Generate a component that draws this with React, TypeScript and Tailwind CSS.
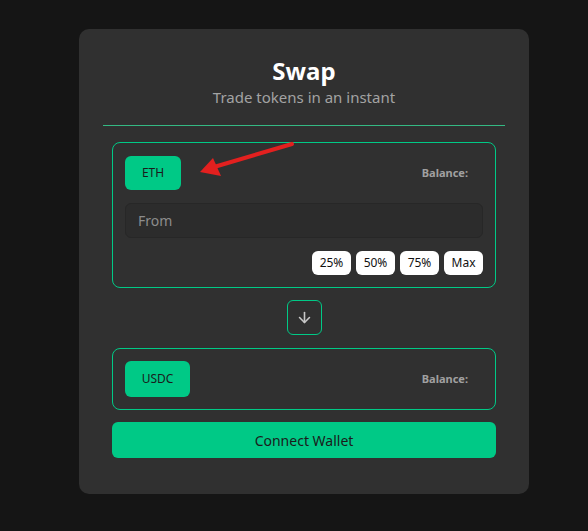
import { ArrowDown } from "lucide-react";

const font = { fontFamily: '"Noto Sans", "Open Sans", sans-serif' };

function TokenButton({ label, className }: { label: string; className: string }) {
  return (
    <button
      className={`rounded-md bg-[#00c986] text-[12px] text-[#1b1b1b] flex items-center justify-center ${className}`}
    >
      {label}
    </button>
  );
}

export default function App() {
  return (
    <main
      className="relative min-h-[531px] w-full bg-[#151515] pl-[79px] pt-[29px]"
      style={font}
    >
      <div className="w-[450px] h-[465px] rounded-[10px] bg-[#303030] px-6 pt-[28px]">
        <h1 className="text-center text-2xl leading-7 font-bold text-white">Swap</h1>
        <p className="text-center text-[15px] leading-6 text-[#a3a3a3]">
          Trade tokens in an instant
        </p>

        <div className="mt-4 border-t border-[#34b983]" />

        <div className="mx-[9px] mt-4 rounded-lg border border-[#00c986] px-3 pt-[13px] pb-3">
          <div className="flex items-center justify-between">
            <TokenButton label="ETH" className="w-[56px] h-[34px]" />
            <span className="mr-[15px] text-[11px] font-bold text-[#a0a0a0]">Balance:</span>
          </div>

          <input
            placeholder="From"
            className="mt-[13px] h-[35px] w-full rounded-md border border-[#272727] bg-[#2c2c2c] px-3 text-[14px] text-white placeholder:text-[#8c8c8c] outline-none"
          />

          <div className="mt-[13px] flex justify-end gap-[5px]">
            {["25%", "50%", "75%", "Max"].map((p) => (
              <button
                key={p}
                className="h-6 w-[39px] rounded-md bg-white text-[12px] text-[#111]"
              >
                {p}
              </button>
            ))}
          </div>
        </div>

        <div className="mt-3 flex justify-center">
          <button className="flex h-[35px] w-[35px] items-center justify-center rounded-md border border-[#00c986]">
            <ArrowDown size={17} color="#c8c8c8" strokeWidth={2.25} />
          </button>
        </div>

        <div className="mx-[9px] mt-[13px] rounded-lg border border-[#00c986] px-3 py-3">
          <div className="flex items-center justify-between">
            <TokenButton label="USDC" className="w-[65px] h-[36px]" />
            <span className="mr-[15px] text-[11px] font-bold text-[#a0a0a0]">Balance:</span>
          </div>
        </div>

        <button className="mx-[9px] mt-3 h-9 w-[384px] rounded-md bg-[#00c986] text-[14px] text-[#1b1b1b]">
          Connect Wallet
        </button>
      </div>

      {/* annotation arrow */}
      <svg
        className="absolute left-0 top-0 pointer-events-none"
        width="588"
        height="531"
      >
        <line x1="292" y1="144" x2="214" y2="167" stroke="#e3201f" strokeWidth="4" strokeLinecap="round" />
        <polygon points="200,172 213,158 221,176" fill="#e3201f" />
      </svg>
    </main>
  );
}
